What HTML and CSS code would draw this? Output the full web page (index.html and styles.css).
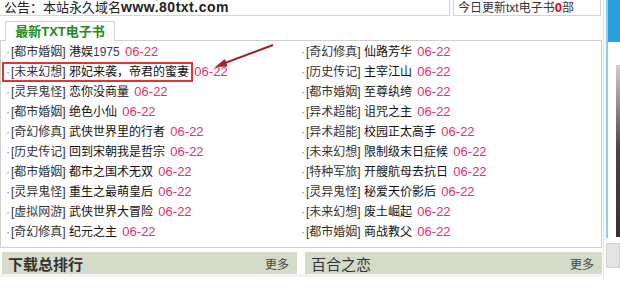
FILE: index.html
```html
<!DOCTYPE html>
<html lang="zh-CN">
<head>
    <meta charset="UTF-8">
    <title>最新TXT电子书</title>
    <link rel="stylesheet" href="styles.css">
</head>
<body>

<div class="page">
    <div class="main">
        <div class="topbar">
            <div class="notice">公告：本站永久域名<b>www.80txt.com</b></div>
            <div class="today">今日更新txt电子书<b>0</b>部</div>
        </div>

        <div class="tabs">
            <span class="tab">最新TXT电子书</span>
        </div>

        <div class="box">
            <ul class="list">
                <li><span class="dot">·</span><span class="cat">[都市婚姻]</span> 港娱<span class="num">1975</span> <span class="date">06-22</span></li>
                <li><span class="mark"><span class="dot">·</span><span class="cat">[未来幻想]</span> 邪妃来袭，帝君的蜜妻</span> <span class="date">06-22</span></li>
                <li><span class="dot">·</span><span class="cat">[灵异鬼怪]</span> 恋你没商量 <span class="date">06-22</span></li>
                <li><span class="dot">·</span><span class="cat">[都市婚姻]</span> 绝色小仙 <span class="date">06-22</span></li>
                <li><span class="dot">·</span><span class="cat">[奇幻修真]</span> 武侠世界里的行者 <span class="date">06-22</span></li>
                <li><span class="dot">·</span><span class="cat">[历史传记]</span> 回到宋朝我是哲宗 <span class="date">06-22</span></li>
                <li><span class="dot">·</span><span class="cat">[都市婚姻]</span> 都市之国术无双 <span class="date">06-22</span></li>
                <li><span class="dot">·</span><span class="cat">[灵异鬼怪]</span> 重生之最萌皇后 <span class="date">06-22</span></li>
                <li><span class="dot">·</span><span class="cat">[虚拟网游]</span> 武侠世界大冒险 <span class="date">06-22</span></li>
                <li><span class="dot">·</span><span class="cat">[奇幻修真]</span> 纪元之主 <span class="date">06-22</span></li>
            </ul>
            <ul class="list">
                <li><span class="dot">·</span><span class="cat">[奇幻修真]</span> 仙路芳华 <span class="date">06-22</span></li>
                <li><span class="dot">·</span><span class="cat">[历史传记]</span> 主宰江山 <span class="date">06-22</span></li>
                <li><span class="dot">·</span><span class="cat">[都市婚姻]</span> 至尊纨绔 <span class="date">06-22</span></li>
                <li><span class="dot">·</span><span class="cat">[异术超能]</span> 诅咒之主 <span class="date">06-22</span></li>
                <li><span class="dot">·</span><span class="cat">[异术超能]</span> 校园正太高手 <span class="date">06-22</span></li>
                <li><span class="dot">·</span><span class="cat">[未来幻想]</span> 限制级末日症候 <span class="date">06-22</span></li>
                <li><span class="dot">·</span><span class="cat">[特种军旅]</span> 开艘航母去抗日 <span class="date">06-22</span></li>
                <li><span class="dot">·</span><span class="cat">[灵异鬼怪]</span> 秘爱天价影后 <span class="date">06-22</span></li>
                <li><span class="dot">·</span><span class="cat">[未来幻想]</span> 废土崛起 <span class="date">06-22</span></li>
                <li><span class="dot">·</span><span class="cat">[都市婚姻]</span> 商战教父 <span class="date">06-22</span></li>
            </ul>

            <!-- arrow pointing at the marked row -->
            <svg class="arrow" width="70" height="34" viewBox="0 0 70 34">
                <line x1="62" y1="8" x2="14" y2="26" stroke="#a3262b" stroke-width="2"/>
                <polygon points="4,30 13.8,22 16.6,29.4" fill="#a3262b"/>
            </svg>
        </div>

        <div class="bars">
            <div class="bar bar-left"><span class="bar-title">下载总排行</span><span class="more">更多</span></div>
            <div class="bar bar-right"><span class="bar-title">百合之恋</span><span class="more">更多</span></div>
        </div>
    </div>

    <div class="side">
        <div class="side-in">
            <div class="side-head"></div>
            <div class="side-body"><div class="side-pic"></div></div>
        </div>
        <div class="side-foot"></div>
    </div>
</div>

</body>
</html>
```

FILE: styles.css
```css
* {
    margin: 0;
    padding: 0;
    box-sizing: border-box;
}

body {
    font-family: "Liberation Sans", "Noto Sans CJK SC", sans-serif;
    font-size: 12px;
    color: #222;
    background: #fff;
    width: 620px;
    height: 300px;
    overflow: hidden;
}

.page {
    display: flex;
}

.main {
    width: 603px;
}

/* top strip */
.topbar {
    display: flex;
    height: 16px;
}

.notice {
    width: 450px;
    border: 1px solid #d4d4d4;
    border-top: none;
    border-left: none;
    padding-left: 4px;
    font-size: 13px;
    line-height: 15px;
    color: #222;
}

.notice b {
    font-family: "Liberation Sans", sans-serif;
    font-size: 14px;
    letter-spacing: 0.5px;
}

.today {
    width: 148px;
    margin-left: 3px;
    border: 1px solid #d4d4d4;
    border-top: none;
    padding-left: 4px;
    font-size: 12px;
    line-height: 15px;
    color: #333;
}

.today b {
    color: #e00;
    font-family: "Liberation Sans", sans-serif;
    font-size: 13px;
}

/* tab */
.tabs {
    margin-top: 5px;
    padding-left: 5px;
    display: flex;
}

.tab {
    position: relative;
    z-index: 1;
    width: 110px;
    height: 20px;
    margin-bottom: -1px;
    border: 1px solid #d0d0d0;
    border-bottom: none;
    background: #fff;
    text-align: center;
    font-size: 13px;
    font-weight: bold;
    line-height: 19px;
    color: #25891c;
}

/* list box */
.box {
    position: relative;
    display: grid;
    grid-template-columns: 295px 1fr;
    height: 208px;
    border: 1px solid #d0d0d0;
    padding: 1px 0 0 5px;
}

.list {
    list-style: none;
}

.list li {
    height: 20px;
    line-height: 20px;
    white-space: nowrap;
    color: #111;
}

.dot {
    color: #888;
    margin-right: 1px;
}

.cat {
    color: #333;
}

.num {
    color: #3b3a70;
}

.date {
    color: #e2306a;
    margin-left: 2px;
    font-family: "Liberation Sans", sans-serif;
    font-size: 13px;
}

.mark {
    display: inline-block;
    line-height: 16px;
    padding: 0 2px;
    margin: 0 -2px;
    box-shadow: 0 0 0 2px #e03434;
}

.arrow {
    position: absolute;
    left: 210px;
    top: -4px;
}

/* bottom bars */
.bars {
    display: flex;
    gap: 8px;
    margin-top: 4px;
    padding-left: 2px;
    border-bottom: 3px solid #f3f3f3;
}

.bar {
    display: flex;
    justify-content: space-between;
    align-items: center;
    height: 22px;
    background: #d5dbc9;
    padding: 0 8px 0 6px;
}

.bar-left {
    width: 295px;
}

.bar-right {
    width: 297px;
}

.bar-title {
    font-size: 15px;
    color: #333;
}

.bar-left .bar-title {
    font-weight: bold;
}

.more {
    font-size: 12px;
    color: #444;
}

/* right edge panel */
.side {
    flex: 1;
    margin-left: 1px;
    border-left: 1px solid #dfe6ea;
    padding-left: 2px;
}

.side-in {
    height: 238px;
    border-left: 2px solid #8fcdf0;
}

.side-head {
    height: 42px;
    background: #2c9fdf;
}

.side-body {
    padding: 23px 0 0 8px;
}

.side-pic {
    width: 4px;
    height: 172px;
    background: linear-gradient(#cfcfcf, #444 50%, #333);
}

.side-foot {
    height: 25px;
    margin-top: 5px;
    background: #e4e4e4;
    border: 1px solid #d2d2d2;
}
```
